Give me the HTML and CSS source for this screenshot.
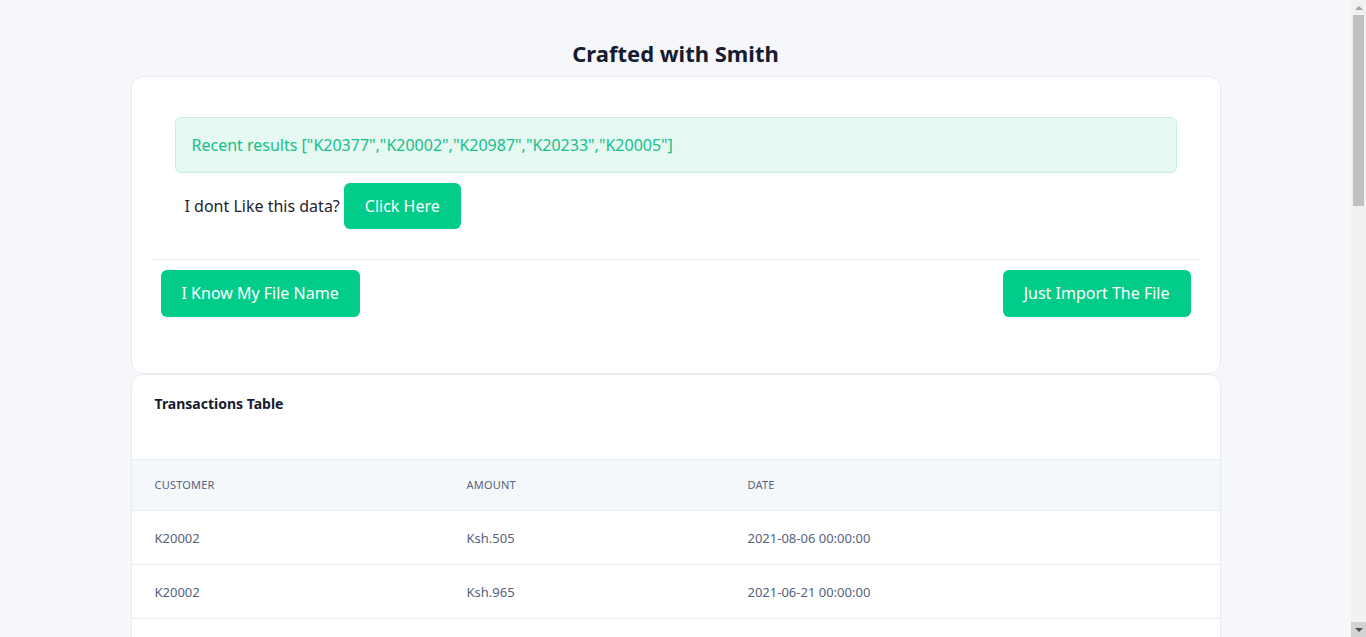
FILE: index.html
```html
<!DOCTYPE html>
<html lang="en">
<head>
<meta charset="utf-8">
<title>Crafted with Smith</title>
<link rel="stylesheet" href="styles.css">
</head>
<body>
<div class="viewport">
  <div class="page">
    <h1 class="title">Crafted with Smith</h1>
    <div class="card card-top">
      <div class="intro">
        <div class="alert">Recent results ["K20377","K20002","K20987","K20233","K20005"]</div>
        <div class="retry">
          <span class="retry-text">I dont Like this data?</span>
          <button class="btn btn-sm">Click Here</button>
        </div>
      </div>
      <hr class="divider">
      <div class="actions">
        <button class="btn">I Know My File Name</button>
        <button class="btn">Just Import The File</button>
      </div>
    </div>
    <div class="card card-table">
      <div class="card-header">Transactions Table</div>
      <table class="table">
        <colgroup>
          <col class="c1"><col class="c2"><col class="c3">
        </colgroup>
        <thead>
          <tr><th>Customer</th><th>Amount</th><th>Date</th></tr>
        </thead>
        <tbody>
          <tr><td>K20002</td><td>Ksh.505</td><td>2021-08-06 00:00:00</td></tr>
          <tr><td>K20002</td><td>Ksh.965</td><td>2021-06-21 00:00:00</td></tr>
        </tbody>
      </table>
      <div class="table-rest"></div>
    </div>
  </div>
</div>
<div class="scrollbar">
  <div class="sb-up"></div>
  <div class="sb-track"><div class="sb-thumb"></div></div>
  <div class="sb-down"></div>
</div>
</body>
</html>
```

FILE: styles.css
```css
html, body {
  margin: 0;
  padding: 0;
  height: 100%;
}
body {
  display: flex;
  overflow: hidden;
  background: #f5f7fa;
  font-family: "Noto Sans", "Open Sans", sans-serif;
  color: #1a1f36;
}
.viewport {
  flex: 1;
  min-width: 0;
  height: 100%;
  overflow: hidden;
}
.page {
  max-width: 1090px;
  margin: 0 auto;
  padding-top: 38px;
}
.title {
  margin: 0 0 8px;
  text-align: center;
  font-size: 22px;
  line-height: 30px;
  font-weight: 700;
  color: #161b2e;
}
.card {
  background: #fff;
  border: 1px solid #e9ebf2;
  border-radius: 12px;
}
.card-top {
  padding: 20px 20px 56px;
}
.intro {
  padding: 20px 23px 0 23px;
}
.alert {
  background: #e5f8f1;
  border: 1px solid #c5f1df;
  border-radius: 6px;
  color: #17c08a;
  font-size: 16px;
  line-height: 22px;
  padding: 16px 16px;
}
.retry {
  display: flex;
  align-items: center;
  gap: 4px;
  margin-top: 10px;
  padding-left: 10px;
}
.retry-text {
  font-size: 16px;
  color: #1f2330;
}
.btn {
  font-family: inherit;
  background: #02cc89;
  color: #fff;
  border: none;
  border-radius: 6px;
  font-size: 16px;
  line-height: 23px;
  padding: 12px 21px;
  cursor: pointer;
}
.btn-sm {
  padding: 12px 21px 11px;
}
.divider {
  border: none;
  border-top: 1px solid #e9ebf0;
  margin: 30px 0 10px;
}
.actions {
  display: flex;
  justify-content: space-between;
  padding: 0 9px 0 9px;
}
.card-table {
  overflow: hidden;
  border-bottom-left-radius: 0;
  border-bottom-right-radius: 0;
}
.card-header {
  padding: 19px 23px 45px;
  font-size: 14px;
  line-height: 20px;
  font-weight: 700;
  color: #161b2e;
}
.table {
  width: 100%;
  border-collapse: collapse;
  table-layout: fixed;
}
.c1 { width: 312px; }
.c2 { width: 281px; }
.table th {
  background: #f5f8fb;
  text-align: left;
  text-transform: uppercase;
  font-size: 11px;
  line-height: 14px;
  font-weight: 400;
  color: #56627d;
  letter-spacing: 0.2px;
  height: 50px;
  padding: 0 23px;
  border-top: 1px solid #e9ecf2;
  border-bottom: 1px solid #e9ecf2;
}
.table td {
  font-size: 13px;
  line-height: 18px;
  color: #56627d;
  height: 53px;
  padding: 0 23px;
  border-bottom: 1px solid #e9ecf2;
}
.table-rest {
  height: 200px;
}
.scrollbar {
  width: 15px;
  flex: none;
  height: 100%;
  background: #f1f1f1;
  display: flex;
  flex-direction: column;
}
.sb-up, .sb-down {
  height: 15px;
  flex: none;
  display: flex;
  align-items: center;
  justify-content: center;
}
.sb-up::before {
  content: "";
  border-left: 4px solid transparent;
  border-right: 4px solid transparent;
  border-bottom: 4px solid #a3a3a3;
}
.sb-down {
  background: #d2d2d2;
}
.sb-down::before {
  content: "";
  border-left: 4px solid transparent;
  border-right: 4px solid transparent;
  border-top: 4px solid #505050;
}
.sb-track {
  flex: 1;
  padding: 0 2px;
}
.sb-thumb {
  height: 191px;
  background: #c1c1c1;
}
```
